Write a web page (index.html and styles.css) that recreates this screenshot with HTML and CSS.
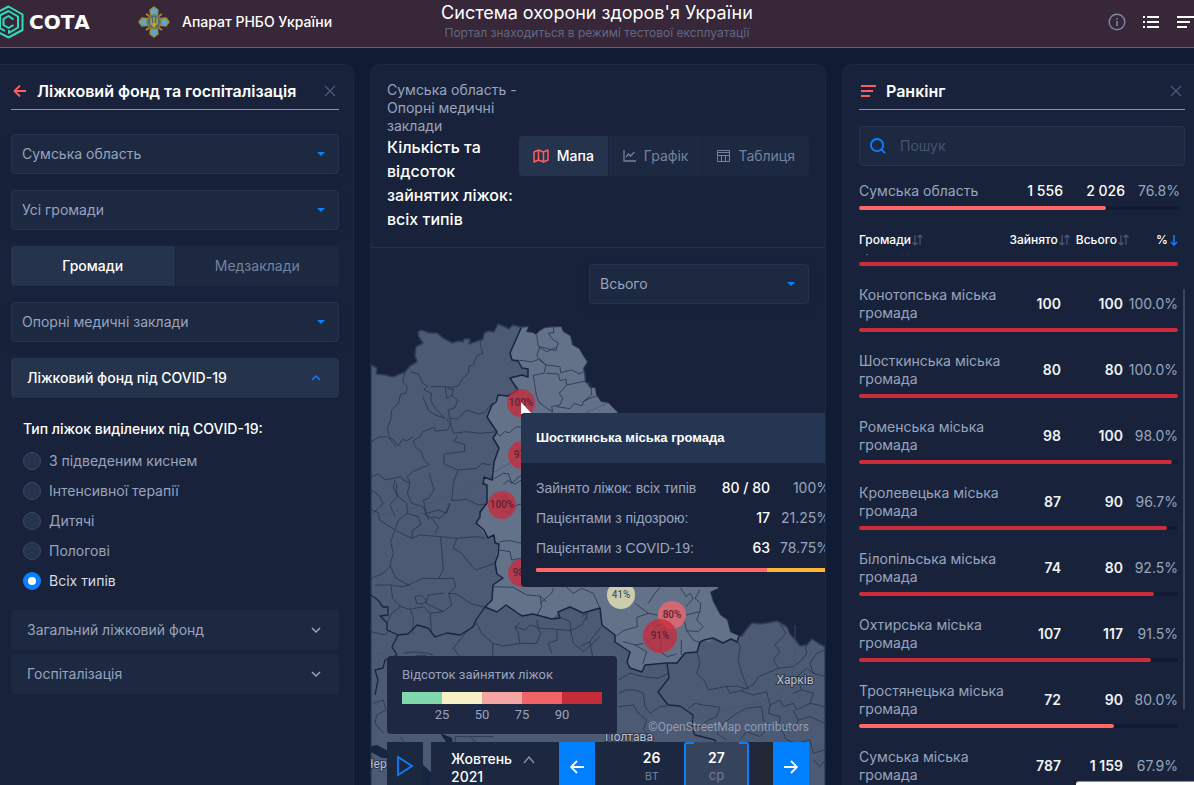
FILE: index.html
```html
<!DOCTYPE html>
<html lang="uk">
<head>
<meta charset="utf-8">
<title>СОТА — Система охорони здоров'я України</title>
<meta name="viewport" content="width=device-width, initial-scale=1">
<link rel="stylesheet" href="styles.css">
</head>
<body>
<div class="app">
  <header class="topbar">
    <div class="brand">
      <svg class="brand-mark" width="24" height="34" viewBox="0 0 24 34" fill="none" stroke="#2fdcbc" stroke-width="2" stroke-linejoin="round" aria-hidden="true">
        <path d="M-7 9.500L8.500 1.500L22.500 9.500V25L8.500 32.500L-6 25"/>
        <path d="M-3 12L8.500 6L18 11.500V22.500L9 28V25"/>
        <path d="M-2 22L5 26"/>
        <path d="M13.500 14.500L8.500 11L3.500 14V20L8.500 23L13.500 20"/>
        <path d="M0 11V23"/>
      </svg>
      <span class="brand-name">СОТА</span>
      <svg class="emblem" width="32" height="32" viewBox="0 0 32 32" aria-hidden="true">
        <g fill="#56a9cf" stroke="#a58a34" stroke-width="1.500" stroke-linejoin="round">
          <path d="M16 1L20 4L19 13H13L12 4Z"/>
          <path d="M16 31L20 28L19 19H13L12 28Z"/>
          <path d="M1 16L4 12L13 13V19L4 20Z"/>
          <path d="M31 16L28 12L19 13V19L28 20Z"/>
        </g>
        <path d="M8 8L11 10M24 8L21 10M8 24L11 22M24 24L21 22" stroke="#a58a34" stroke-width="2"/>
        <circle cx="16" cy="16" r="7" fill="#4a6b80" stroke="#8c7c40" stroke-width="1.500"/>
        <path d="M13 12V18H19V12M16 11V21M14 18L16 21L18 18" fill="none" stroke="#c9a52c" stroke-width="1.300"/>
      </svg>
      <span class="org">Апарат РНБО України</span>
    </div>
    <div class="heading">
      <h1>Система охорони здоров'я України</h1>
      <p>Портал знаходиться в режимі тестової експлуатації</p>
    </div>
    <div class="actions">
      <button type="button" aria-label="Інформація"><svg width="18" height="18" viewBox="0 0 18 18" fill="none" stroke="#7c88a3" stroke-width="1.400"><circle cx="9" cy="9" r="7.800"/><path d="M9 8V13M9 5V6.500" stroke-width="1.600"/></svg></button>
      <button type="button" aria-label="Список"><svg width="18" height="18" viewBox="0 0 18 18" stroke="#fff" stroke-width="2"><path d="M1 4H3M5 4H17M1 9H3M5 9H17M1 14H3M5 14H17"/></svg></button>
      <button type="button" aria-label="Меню"><svg width="18" height="18" viewBox="0 0 18 18" stroke="#fff" stroke-width="2"><path d="M1 4H18M1 9H14M1 14H11"/></svg></button>
    </div>
  </header>

  <main class="columns">
    <section class="panel filters">
      <header class="panel-head">
        <button type="button" class="back" aria-label="Назад"><svg width="14" height="14" viewBox="0 0 14 14" fill="none" stroke="#ff5c60" stroke-width="1.800"><path d="M13 7H2M7 1.500L1.500 7L7 12.500"/></svg></button>
        <h2>Ліжковий фонд та госпіталізація</h2>
        <button type="button" class="close" aria-label="Закрити"><svg width="12" height="12" viewBox="0 0 12 12" stroke="#4d5a75" stroke-width="1.300"><path d="M1 1L11 11M11 1L1 11"/></svg></button>
      </header>
      <div class="stack">
        <div class="select"><select aria-label="Область"><option>Сумська область</option></select></div>
        <div class="select"><select aria-label="Громада"><option>Усі громади</option></select></div>
        <div class="tabs even">
          <button type="button" class="tab active">Громади</button>
          <button type="button" class="tab">Медзаклади</button>
        </div>
        <div class="select"><select aria-label="Тип закладів"><option>Опорні медичні заклади</option></select></div>
        <button type="button" class="fold open">Ліжковий фонд під COVID-19<svg width="10" height="6" viewBox="0 0 10 6" fill="none" stroke="#0a7cff" stroke-width="1.500"><path d="M1 5L5 1L9 5"/></svg></button>
      </div>
      <fieldset class="radios">
        <legend>Тип ліжок виділених під COVID-19:</legend>
        <label><input type="radio" name="beds">З підведеним киснем</label>
        <label><input type="radio" name="beds">Інтенсивної терапії</label>
        <label><input type="radio" name="beds">Дитячі</label>
        <label><input type="radio" name="beds">Пологові</label>
        <label><input type="radio" name="beds" checked>Всіх типів</label>
      </fieldset>
      <div class="folds">
        <button type="button" class="fold">Загальний ліжковий фонд<svg width="10" height="6" viewBox="0 0 10 6" fill="none" stroke="#98a3bd" stroke-width="1.500"><path d="M1 1L5 5L9 1"/></svg></button>
        <button type="button" class="fold">Госпіталізація<svg width="10" height="6" viewBox="0 0 10 6" fill="none" stroke="#98a3bd" stroke-width="1.500"><path d="M1 1L5 5L9 1"/></svg></button>
      </div>
    </section>

    <section class="panel center">
      <header class="map-head">
        <div class="map-title">
          <p><span class="region">Сумська область -</span> Опорні медичні заклади</p>
          <h2>Кількість та відсоток зайнятих ліжок: всіх типів</h2>
        </div>
        <div class="tabs">
          <button type="button" class="tab active"><svg width="16" height="14" viewBox="0 0 16 14" fill="none" stroke="#ff5c60" stroke-width="1.500" stroke-linejoin="round"><path d="M1 3L5.500 1L10.500 3L15 1V11L10.500 13L5.500 11L1 13ZM5.500 1V11M10.500 3V13"/></svg>Мапа</button>
          <button type="button" class="tab"><svg width="13" height="12" viewBox="0 0 13 12" fill="none" stroke="#75829e" stroke-width="1.300"><path d="M1 0V11H13M3 7L5.500 4L7.500 6L11.500 2"/></svg>Графік</button>
          <button type="button" class="tab"><svg width="13" height="12" viewBox="0 0 13 12" fill="none" stroke="#75829e" stroke-width="1"><path d="M.5 .5H12.500V11.500H.5ZM.5 2.500H12.500M.5 5.500H12.500M4.500 5.500V11.500M8.500 5.500V11.500"/></svg>Таблиця</button>
        </div>
      </header>
      <div class="map">
        <svg class="map-art" viewBox="371 248 454 537" preserveAspectRatio="xMinYMin slice" role="img" aria-label="Мапа громад Сумської області">
          <path fill="#4c5a74" stroke="#303e5a" stroke-width="1.500" stroke-linejoin="round" d="M371 365L377 368L376 374L385 375L393 377L405 372L410 366L417 362L415 355L416 347L423 343L419 337L418 332L421 330L430 333L437 333L443 338L452 343L459 341L463 342L464 339L470 339L469 344L478 341L483 339L484 333L489 331L494 332L498 324L505 327L509 329L513 325L520 327L528 327L526 332L533 333L536 335L540 331L545 328L551 327L561 327L563 332L570 336L572 342L572 345L579 349L583 356L587 362L583 368L585 374L585 382L588 383L590 388L595 388L596 395L601 402L608 403L616 411L640 440L690 540L718 588L712 590L710 592L713 602L716 607L720 615L727 620L730 632L735 636L742 636L746 630L752 623L760 624L767 623L777 621L787 627L790 634L797 642L800 646L807 645L812 639L818 643L825 647V800H371Z"/>
          <path fill="#637189" d="M522 328L528 327L526 332L533 333L536 335L540 331L545 328L561 327L563 332L570 336L572 345L579 349L583 356L587 362L583 368L585 382L590 388L595 388L596 395L601 402L608 403L616 411L640 440L690 540L718 588L710 592L713 602L720 615L727 620L730 632L739 636L737 642L731 639L723 643L713 638L710 642L704 640L700 642L697 652L685 653L677 662L665 664L656 665L645 665L642 672L630 668L627 662L630 652L615 642L615 635L602 625L600 608L590 611L583 613L570 607L560 612L552 619L533 614L522 616L506 605L497 612L485 607L492 600L493 585L503 578L497 574L495 563L498 545L494 537L488 538L476 523L480 515L487 503L487 487L483 477L488 478L492 480L494 462L499 448L493 438L497 432L487 417L492 405L498 395L508 396L518 390L510 378L522 375L528 377L528 369L522 368L518 361L512 360L510 353Z"/>
          <g fill="none" stroke="#28364f" stroke-linejoin="round">
            <g transform="translate(370 250) scale(.3333)" stroke-width="2.500">
              <path d="M105 365L98 395L112 410L108 430L92 432L85 460L65 480L62 510L52 535L58 560L75 575L85 588L98 568L110 572L130 560"/>
              <path d="M120 365L145 372L160 402L172 408L162 420L185 430L182 452L196 475L212 492L226 505L198 496L176 482L158 440"/>
              <path d="M182 410L225 410L248 412L264 408L278 385L296 368L296 350L310 345L320 318L338 310L330 280L345 245"/>
              <path d="M225 410L230 445L246 436L250 420L232 415M246 436L262 450L256 472L236 480L238 504L262 508L290 480L325 492L345 488L358 468L370 458"/>
              <path d="M238 504L244 520L232 540L196 543L192 532L158 545L150 560L130 572L135 590L155 605L160 625L178 645L152 655L128 665L112 680L120 700L100 690L92 680L45 690L25 672L4 680"/>
              <path d="M230 506L245 530L250 550L290 545L330 550L375 546M262 558L252 574L284 584L284 604L222 612L222 642L264 660L322 655L335 640L362 645"/>
              <path d="M4 575L25 562L50 560L62 568L78 590M4 720L25 735L40 760L8 790M75 690L70 715L85 735L60 765L75 800M120 700L112 730L125 760L160 770L176 810"/>
              <path d="M264 660L250 700L245 752L290 748L325 765L350 762M178 670L192 720L176 745L160 750L170 790L205 780L230 790L240 760"/>
              <path d="M500 255L505 290L530 305L560 292L565 280L545 265L535 250L552 248L550 232M560 292L558 302L510 290L500 318L528 345L570 350L572 368L605 360L628 372L640 365"/>
              <path d="M425 330L460 332L485 336L505 328L528 345L522 370L490 376L494 404L500 440M528 370L565 372L570 392L588 388L590 405L568 430L578 445L570 465L545 470L548 486L510 460L500 440"/>
              <path d="M590 405L615 400L642 394L664 402L665 435L640 455L636 468L612 460L600 476L560 470M640 455L660 445L685 436"/>
              <path d="M376 546L390 558L404 545L418 548L440 530L454 532M366 690L400 670L416 672L425 700L454 675M400 705L412 692L436 702L454 690"/>
              <path d="M388 765L405 735L415 755L425 770L420 790L395 780M425 770L454 762"/>
            </g>
            <g transform="translate(370 470) scale(.3333)" stroke-width="2.500">
              <path d="M4 120L25 128L28 150L75 180L62 215L70 250L60 285L78 325L115 345L158 325L205 326L220 300L212 200L150 195L125 205L78 182"/>
              <path d="M80 40L78 75L110 100L112 130L85 150L75 180M110 130L145 140L152 165L128 180L125 205M160 130L185 145L205 170L195 190M240 100L225 130L210 145L185 140"/>
              <path d="M212 200L260 205L318 200L345 205M260 205L250 235L275 250L302 285L318 300L380 278M205 326L250 325L258 350L236 370L245 405L220 425L168 400L175 375L220 370"/>
              <path d="M4 325L40 310L62 288M15 345L62 345L95 350L120 345M62 345L68 385L92 410L65 430L50 460M135 380L152 375L170 390L160 402L140 400ZM92 410L120 418L160 410L180 430L220 425M120 418L130 440L128 490M180 430L185 490M236 370L258 372L305 402L345 412"/>
              <path d="M4 485L45 495L58 480M320 460L335 490L368 520L400 528L450 520L445 490L435 470L450 460M320 460L285 490L250 535L270 560M368 520L368 558"/>
              <path d="M435 470L465 480L480 465L500 470L512 490L500 520L450 520M500 450L505 475L560 478L602 482L600 455L570 442M560 478L562 510L535 520L545 550M602 482L635 465L650 440M602 482L610 520L640 545L690 500"/>
              <path d="M388 215L420 212L454 220M388 240L420 245L425 270L454 265M372 350L430 352L470 375L510 378L515 410L500 438M510 400L545 370L550 355M590 352L610 370L635 355L670 370L690 415M510 378L530 395"/>
              <path d="M10 700L40 690L48 720L20 735L15 760L40 790M90 800L110 825M240 800L260 830L255 800L300 800L370 800M300 800L330 830"/>
              <path d="M100 550Q145 540 190 555M130 560Q170 545 195 575"/>
            </g>
            <g transform="translate(580 460) scale(.3333)" stroke-width="2.500">
              <path d="M165 430L205 460L170 472L172 500L130 512L110 528M205 460L232 465M205 430L225 400L240 382M300 382L318 410L330 400L340 415L318 440M318 465L360 455L362 430L345 415L360 390M360 455L350 480L370 500L355 515L320 512M320 512L310 475M304 540V585M320 512L340 540L365 550"/>
              <path d="M130 545L165 555L190 550M165 555L200 575L188 612M215 560L205 540L190 535M245 540L240 575L262 590L290 582M225 500L250 490L260 520L240 545"/>
              <path d="M352 578L360 610L350 640L375 665L385 690L435 680L470 678L505 688L485 640L475 600L480 560L475 545M600 492L618 520L585 555L600 575L580 600L595 625L560 640L535 650L520 675L485 690M595 625L640 620L665 600L680 580L675 550"/>
              <path d="M115 660L150 640L190 650L235 655L265 640M190 700L165 690L140 690L115 700M190 700L195 740L210 760L240 740L262 738M115 740L160 735L175 760L200 780L190 810L225 840"/>
              <path d="M325 745L345 730L370 735L420 742L410 770L385 780L360 800L340 800M430 790L410 820L440 840M440 680L450 700L480 692L520 705L560 695L570 735L600 720L610 740L640 730L650 750L690 730L735 740"/>
              <path d="M430 790L470 760L500 745L545 740L550 780L570 800L540 830L500 815L480 840M570 735L565 760L600 770L598 800L640 810L655 780L640 750M690 730L700 700L665 690L650 650L680 625L700 640L735 650M640 700L665 690M700 640L690 610L710 580L735 570M600 800L620 840M655 780L690 770L735 790M690 840L700 880L735 870M700 900L720 920L735 900"/>
              <path d="M0 560L30 545L38 590M5 470L22 460L20 480M65 500L40 530L30 545M620 840L650 850L690 840"/>
            </g>
          </g>
          <g fill="none" stroke="#172541" stroke-width="1.300" stroke-linejoin="round">
            <path stroke-width="1.500" d="M521 328L510 353L512 360L518 361L522 368L528 369V377L522 375L510 378L518 390L508 396L498 395L496 402L492 405L487 417L497 432L493 438L499 448L494 462L493 472L492 480L484 477L483 484L487 485L487 503L480 512L480 517L476 523L484 530L488 538L494 535L495 543L499 544L498 555L495 563L497 574L503 578L493 585L492 600L485 607L497 612L506 605L522 616L533 614L552 619L560 618L558 612L570 607L583 613L600 608L602 625L615 635V642L630 652L627 662L630 668L642 672L645 665L667 663L677 663L685 653L697 652L700 642L704 640L713 638L723 643L731 639L737 642L739 636"/>
            <path d="M371 595L378 600L383 607H388V615L380 616L387 623V630L398 635L408 634L417 625L428 628L435 637L447 633L460 635L473 627L476 620L485 607M398 635L392 647L397 655M397 655L385 660L383 668L375 670L378 680L375 695M667 663L669 678L658 692L668 705L680 706L693 715L692 728L695 735L715 740L718 748"/>
          </g>
          <g fill="none" stroke="#415676" stroke-width="1" opacity=".7">
            <path d="M371 516Q440 505 478 483M492 473Q505 467 521 455M371 654H387M585 413L608 403M795 625V660Q795 700 740 706L690 720"/>
          </g>
          <path fill="#172541" d="M371 746L377 745L390 752V758L382 758L371 752ZM421 763L434 775V790H421ZM440 733L452 738V742H446Z"/>
          <g class="bubbles">
            <circle cx="521" cy="403" r="14" class="hot"/><text x="521" y="406">100%</text>
            <circle cx="522" cy="455" r="14" class="hot"/><text x="523" y="458">97%</text>
            <circle cx="502" cy="505" r="14" class="hot"/><text x="502" y="508">100%</text>
            <circle cx="522" cy="573" r="14" class="hot"/><text x="522" y="576">98%</text>
            <circle cx="621" cy="595" r="14" class="calm"/><text x="621" y="598">41%</text>
            <circle cx="672" cy="615" r="14" class="warm"/><text x="672" y="618">80%</text>
            <circle cx="660" cy="636" r="17" class="hot"/><text x="660" y="639">91%</text>
          </g>
          <g class="cities">
            <text x="795" y="684">Харків</text>
            <text x="629" y="741">Полтава</text>
            <text x="376" y="768">Чер</text>
          </g>
          <path fill="#fff" d="M521 402V414H532Z"/>
        </svg>
        <div class="select map-select"><select aria-label="Показник"><option>Всього</option></select></div>
        <span class="credit">©OpenStreetMap contributors</span>
        <div class="tooltip">
          <h3>Шосткинська міська громада</h3>
          <table>
            <tbody>
              <tr><th scope="row">Зайнято ліжок: всіх типів</th><td class="num">80 / 80</td><td>100%</td></tr>
              <tr><th scope="row">Пацієнтами з підозрою:</th><td class="num">17</td><td>21.25%</td></tr>
              <tr><th scope="row">Пацієнтами з COVID-19:</th><td class="num">63</td><td>78.75%</td></tr>
            </tbody>
          </table>
          <div class="split"><span style="width:78.75%"></span></div>
        </div>
        <div class="map-foot">
          <div class="legend">
            <p>Відсоток зайнятих ліжок</p>
            <div class="scale"><i class="s1"></i><i class="s2"></i><i class="s3"></i><i class="s4"></i><i class="s5"></i></div>
            <div class="ticks"><span>25</span><span>50</span><span>75</span><span>90</span></div>
          </div>
          <div class="timeline">
            <button type="button" class="play" aria-label="Відтворити"><svg width="18" height="22" viewBox="0 0 18 22" fill="none" stroke="#0a80ff" stroke-width="1.800"><path d="M2 1L16 10L2 19Z"/></svg></button>
            <button type="button" class="month"><span>Жовтень 2021</span><svg width="12" height="8" viewBox="0 0 12 8" fill="none" stroke="#8390aa" stroke-width="1.500"><path d="M1 7L6 1L11 7"/></svg></button>
            <button type="button" class="step" aria-label="Назад"><svg width="14" height="14" viewBox="0 0 14 14" fill="none" stroke="#fff" stroke-width="1.800"><path d="M14 7H1M7 1L1 7L7 13"/></svg></button>
            <div class="days">
              <button type="button" class="day"><b>26</b>вт</button>
              <button type="button" class="day chosen"><b>27</b>ср</button>
            </div>
            <button type="button" class="step" aria-label="Вперед"><svg width="14" height="14" viewBox="0 0 14 14" fill="none" stroke="#fff" stroke-width="1.800"><path d="M0 7H13M7 1L13 7L7 13"/></svg></button>
          </div>
        </div>
      </div>
    </section>

    <section class="panel ranking">
      <header class="panel-head">
        <svg width="15" height="14" viewBox="0 0 15 14" stroke="#ff5c60" stroke-width="2"><path d="M0 2H15M0 7H12M0 12H9"/></svg>
        <h2>Ранкінг</h2>
        <button type="button" class="close" aria-label="Закрити"><svg width="12" height="12" viewBox="0 0 12 12" stroke="#4d5a75" stroke-width="1.300"><path d="M1 1L11 11M11 1L1 11"/></svg></button>
      </header>
      <label class="search">
        <svg width="16" height="16" viewBox="0 0 17 17" fill="none" stroke="#0a80ff" stroke-width="2"><circle cx="7.500" cy="7.500" r="6.500"/><path d="M12 12L16 16"/></svg>
        <input type="search" placeholder="Пошук" aria-label="Пошук">
      </label>
      <div class="summary cells">
        <span>Сумська область</span><b>1 556</b><b>2 026</b><span class="pct">76.8%</span>
        <div class="bar"><span class="soft" style="width:76.8%"></span></div>
      </div>
      <table class="rank">
        <thead>
          <tr>
            <th><button type="button">Громади<svg width="11" height="12" viewBox="0 0 11 12" fill="none" stroke="#4a5874" stroke-width="1.200"><path d="M3 1V11M.5 8.500L3 11L5.500 8.500M8 11V1M5.500 3.500L8 1L10.500 3.500"/></svg></button></th>
            <th><button type="button">Зайнято<svg width="11" height="12" viewBox="0 0 11 12" fill="none" stroke="#4a5874" stroke-width="1.200"><path d="M3 1V11M.5 8.500L3 11L5.500 8.500M8 11V1M5.500 3.500L8 1L10.500 3.500"/></svg></button></th>
            <th><button type="button">Всього<svg width="11" height="12" viewBox="0 0 11 12" fill="none" stroke="#4a5874" stroke-width="1.200"><path d="M3 1V11M.5 8.500L3 11L5.500 8.500M8 11V1M5.500 3.500L8 1L10.500 3.500"/></svg></button></th>
            <th><button type="button">%<svg width="9" height="11" viewBox="0 0 9 11" fill="none" stroke="#0a80ff" stroke-width="1.600"><path d="M5 0V10M2 7L5 10L8 7"/></svg></button></th>
          </tr>
        </thead>
        <tbody>
          <tr class="cells"><td>Глухівська міська громада</td><td class="val">60</td><td class="val">60</td><td class="pct">100.0%</td><td class="bar"><span style="width:100%"></span></td></tr>
          <tr class="cells"><td>Конотопська міська громада</td><td class="val">100</td><td class="val">100</td><td class="pct">100.0%</td><td class="bar"><span style="width:100%"></span></td></tr>
          <tr class="cells"><td>Шосткинська міська громада</td><td class="val">80</td><td class="val">80</td><td class="pct">100.0%</td><td class="bar"><span style="width:100%"></span></td></tr>
          <tr class="cells"><td>Роменська міська громада</td><td class="val">98</td><td class="val">100</td><td class="pct">98.0%</td><td class="bar"><span style="width:98%"></span></td></tr>
          <tr class="cells"><td>Кролевецька міська громада</td><td class="val">87</td><td class="val">90</td><td class="pct">96.7%</td><td class="bar"><span style="width:96.7%"></span></td></tr>
          <tr class="cells"><td>Білопільська міська громада</td><td class="val">74</td><td class="val">80</td><td class="pct">92.5%</td><td class="bar"><span style="width:92.5%"></span></td></tr>
          <tr class="cells"><td>Охтирська міська громада</td><td class="val">107</td><td class="val">117</td><td class="pct">91.5%</td><td class="bar"><span style="width:91.5%"></span></td></tr>
          <tr class="cells"><td>Тростянецька міська громада</td><td class="val">72</td><td class="val">90</td><td class="pct">80.0%</td><td class="bar"><span class="soft" style="width:80%"></span></td></tr>
          <tr class="cells"><td>Сумська міська громада</td><td class="val">787</td><td class="val">1 159</td><td class="pct">67.9%</td><td class="bar"><span class="soft" style="width:67.9%"></span></td></tr>
        </tbody>
      </table>
      <i class="thumb"></i>
    </section>
  </main>
  <div class="status"></div>
</div>
</body>
</html>
```
FILE: styles.css
```css
* { box-sizing: border-box; margin: 0; }

body {
  background: #101c34;
  color: #98a3bd;
  font: 14px/18px Inter, "Liberation Sans", sans-serif;
}

button, select, input { font: inherit; color: inherit; }
button { border: 0; padding: 0; background: none; cursor: pointer; }
svg { display: block; flex: none; }
h1, h2, h3 { color: #fff; }

.app {
  position: relative;
  display: flex;
  flex-direction: column;
  height: 100vh;
  overflow: hidden;
}

/* Top bar */
.topbar {
  flex: none;
  display: grid;
  grid-template-columns: 1fr auto 1fr;
  height: 48px;
  background: #372738;
  border-bottom: 1px solid #a8474f;
}
.brand { display: flex; align-items: center; padding-bottom: 4px; white-space: nowrap; }
.brand-mark { margin-right: 5px; }
.brand-name { width: 65px; color: #fff; font-family: "DejaVu Sans", sans-serif; font-size: 20px; font-weight: 700; }
.emblem { margin: 0 12px 0 44px; }
.org { color: #fff; font-weight: 500; }
.heading { text-align: center; padding-top: 3px; }
.heading h1 { font-size: 18px; line-height: 20px; font-weight: 400; }
.heading p { color: #606782; font-size: 12px; line-height: 20px; }
.actions { display: flex; justify-content: flex-end; align-items: center; gap: 16px; padding-bottom: 4px; }

/* Panels */
.columns {
  flex: 1;
  min-height: 0;
  display: grid;
  grid-template-columns: 354fr 456fr 352fr;
  gap: 16px;
  padding-top: 16px;
}
.panel {
  position: relative;
  display: flex;
  flex-direction: column;
  min-width: 0;
  min-height: 0;
  background: #18233b;
  border: 1px solid #1d2a43;
  border-bottom: 0;
  border-radius: 10px 10px 0 0;
}
.filters { padding: 8px 14px 0 11px; border-left: 0; border-top-left-radius: 0; }
.ranking { padding: 8px 9px 0 16px; border-right: 0; border-top-right-radius: 0; }
.panel-head {
  flex: none;
  display: flex;
  align-items: center;
  gap: 10px;
  height: 37px;
  padding: 0 3px 0 2px;
  border-bottom: 1px solid #ff6468;
}
.panel-head h2 { flex: 1; font-size: 16px; line-height: 20px; font-weight: 600; white-space: nowrap; }

/* Filters */
.stack { display: grid; gap: 16px; padding-top: 24px; }
.select { display: grid; align-items: center; }
.select select, .select::after { grid-area: 1 / 1; }
.select select {
  appearance: none;
  width: 100%;
  height: 40px;
  padding: 0 10px;
  background: #1c2941;
  border: 1px solid #25334e;
  border-radius: 4px;
  box-shadow: 0 4px 10px rgba(20, 28, 50, .3);
}
.select::after {
  content: "";
  justify-self: end;
  margin-right: 14px;
  border: 4px solid transparent;
  border-top-color: #0a80ff;
  border-bottom: 0;
  pointer-events: none;
}
.tabs { display: flex; gap: 1px; }
.tab {
  display: flex;
  align-items: center;
  justify-content: center;
  gap: 8px;
  height: 40px;
  padding: 0 14px;
  background: #1c2941;
  color: #75829e;
}
.tab:first-child { border-radius: 4px 0 0 4px; }
.tab:last-child { border-radius: 0 4px 4px 0; }
.tab.active { background: #26334c; color: #fff; font-weight: 500; }
.even .tab { flex: 1; }
.fold {
  display: flex;
  align-items: center;
  justify-content: space-between;
  height: 40px;
  padding: 0 18px 0 16px;
  background: #1c2941;
  border-radius: 4px;
}
.fold.open { background: #26334c; color: #fff; font-weight: 500; }
.radios { display: grid; gap: 12px; border: 0; padding: 22px 12px 20px; }
.radios legend { float: left; padding: 0 0 2px; color: #fff; font-weight: 500; line-height: 18px; }
.radios label { display: flex; align-items: center; gap: 8px; }
.radios label:has(:checked) { color: #d5dbe8; }
.radios input {
  appearance: none;
  width: 18px;
  height: 18px;
  margin: 0;
  background: #26334c;
  border: 1px solid #3b4963;
  border-radius: 50%;
}
.radios input:checked { background: #fff; border: 5px solid #0a80ff; }
.folds { display: grid; gap: 4px; }

/* Map column */
.map-head {
  flex: none;
  display: flex;
  align-items: center;
  justify-content: space-between;
  padding: 16px;
  border-bottom: 1px solid #24314c;
}
.map-title { flex: 1; min-width: 0; }
.region { display: block; white-space: nowrap; }
.map-title h2 { font-size: 16px; line-height: 24px; font-weight: 500; }
.map { position: relative; flex: 1; min-height: 0; overflow: hidden; }
.map-art { position: absolute; width: 100%; height: 100%; }
.bubbles text {
  fill: #5b2238;
  font: 500 10px Roboto, sans-serif;
  text-anchor: middle;
}
.hot { fill: #c62c3b; fill-opacity: .78; }
.warm { fill: #ee666c; fill-opacity: .8; }
.calm { fill: #cdcdae; }
.calm + text { fill: #51586a; }
.cities text {
  fill: #b9c0cc;
  stroke: #2c3850;
  stroke-width: 2px;
  paint-order: stroke;
  font: 12px Roboto, sans-serif;
  text-anchor: middle;
}
.map-select { position: absolute; top: 16px; right: 16px; width: 220px; }
.credit {
  position: absolute;
  right: 16px;
  bottom: 49px;
  color: #909cb2;
  font: 12px/18px Roboto, sans-serif;
}
.tooltip {
  position: absolute;
  top: 165px;
  left: 150px;
  width: 323px;
  padding-bottom: 15px;
  background: #18233b;
  border-radius: 4px;
  font-family: "Liberation Sans", sans-serif;
}
.tooltip h3 {
  padding: 16px 15px;
  background: #253652;
  border-radius: 4px 4px 0 0;
  font-size: 13px;
  line-height: 18px;
  font-weight: 700;
}
.tooltip table { width: 294px; margin: 10px 14px 5px 15px; border-collapse: collapse; }
.tooltip th, .tooltip td { height: 30px; padding: 0; font-weight: 400; text-align: left; white-space: nowrap; }
.tooltip td { width: 60px; font-family: Inter, sans-serif; text-align: right; }
.tooltip .num { width: auto; color: #fff; font-weight: 500; }
.split { display: flex; height: 4px; margin: 0 15px; background: #ffb53a; border-radius: 2px; }
.split span { background: #ff6666; border-radius: 2px 0 0 2px; }
.map-foot {
  position: absolute;
  left: 16px;
  right: 16px;
  bottom: -7px;
  display: flex;
  flex-direction: column;
  align-items: flex-start;
  gap: 8px;
}
.legend {
  padding: 10px 15px;
  background: rgba(27, 38, 64, .95);
  border-radius: 4px;
  font-family: Roboto, sans-serif;
  font-size: 13px;
}
.scale { display: grid; grid-template-columns: repeat(5, 40px); margin: 8px 0 2px; }
.scale i { height: 12px; }
.s1 { background: #80d8ac; }
.s2 { background: #f6f0c4; }
.s3 { background: #f6a6a2; }
.s4 { background: #f06468; }
.s5 { background: #c42c3a; }
.ticks { display: grid; grid-template-columns: repeat(4, 40px); padding-left: 20px; line-height: 18px; text-align: center; }
.timeline { display: flex; align-self: stretch; height: 50px; }
.play, .step { display: grid; place-items: center; flex: none; width: 36px; }
.play { margin-right: 8px; background: #1c2740; }
.step { background: #0080ff; }
.month {
  flex: none;
  display: flex;
  justify-content: space-between;
  width: 128px;
  padding: 8px 24px 0 20px;
  background: #1c2740;
  color: #fff;
  font-weight: 500;
  text-align: left;
}
.month span { width: 64px; }
.month svg { margin-top: 6px; }
.days { flex: 1; display: flex; padding-left: 24px; background: linear-gradient(90deg, #1c2740, #1c2740 80%, #232833); }
.day { width: 65px; padding-bottom: 2px; color: #6f7b96; font-size: 13px; line-height: 16px; }
.day b { display: block; color: #fff; font-size: 14px; line-height: 18px; font-weight: 600; }
.day.chosen {
  background: linear-gradient(90deg, #0a80ff 8px, transparent 8px calc(100% - 8px), #0a80ff calc(100% - 8px)) 0 0 / 100% 2px no-repeat, #36435d;
  border: solid #0a80ff;
  border-width: 0 2px;
  border-radius: 3px 3px 0 0;
}

/* Ranking */
.search {
  flex: none;
  display: flex;
  align-items: center;
  gap: 14px;
  height: 40px;
  margin-top: 16px;
  padding: 0 10px;
  background: #1c2941;
  border: 1px solid #25334e;
  border-radius: 4px;
}
.search input { flex: 1; min-width: 0; border: 0; padding: 0; background: none; outline: 0; }
.search input::placeholder { color: #46536f; opacity: 1; }
.cells {
  display: grid;
  grid-template-columns: minmax(0, 1fr) 54px 62px 55px;
  row-gap: 6px;
  align-items: center;
  padding-top: 20px;
}
.summary { flex: none; margin-right: 5px; padding-top: 16px; }
.cells td { padding: 0; }
.cells b, .cells .val { color: #fff; font-weight: 500; text-align: right; white-space: nowrap; }
.cells .val { color: #f0f2f6; font-weight: 600; }
.cells .pct { text-align: right; }
.cells .bar { grid-column: 1 / -1; height: 4px; background: #111b32; border-radius: 2px; }
.bar span { display: block; height: 4px; background: #cb2c3a; border-radius: 2px; }
.bar .soft { background: #ff6666; }
.rank { display: flex; flex-direction: column; flex: 1; min-height: 0; margin: 20px 7px 0 0; }
.rank thead { display: block; padding-bottom: 4px; }
.rank thead tr { display: flex; gap: 6px; }
.rank th { padding: 0; font-weight: 500; }
.rank th:first-child { flex: 1; }
.rank th:last-child { width: 43px; }
.rank th button { display: flex; align-items: center; gap: 1px; color: #fff; font-size: 12px; line-height: 20px; font-weight: 500; }
.rank th:last-child button { margin-left: auto; }
.rank tbody { display: block; flex: 1; min-height: 0; overflow: hidden; }
.rank tbody tr:first-child { margin-top: -54px; }
.thumb { position: absolute; top: 224px; right: 9px; width: 2px; height: 421px; background: #3a4660; border-radius: 1px; }

.status {
  position: absolute;
  right: 0;
  bottom: 0;
  width: 118px;
  height: 4px;
  background: #fff;
  border-top: 1px solid #8d9097;
  border-radius: 3px 0 0 0;
}
```
